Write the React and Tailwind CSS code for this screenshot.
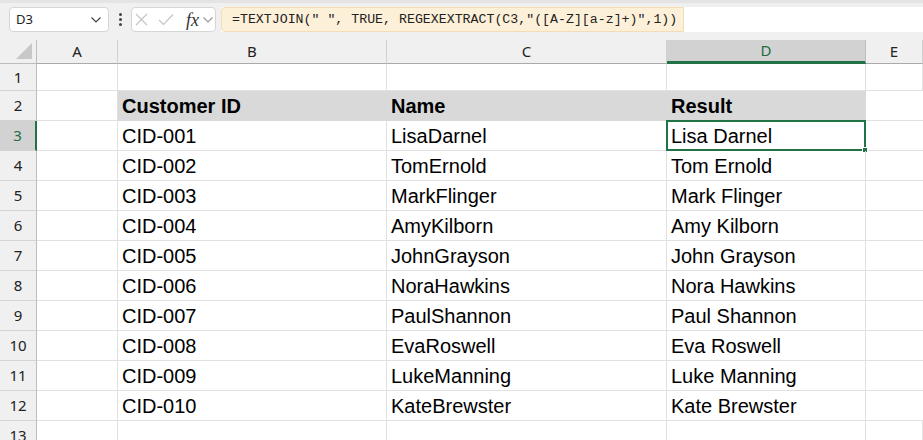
import React from "react";

const rows = [
  ["CID-001", "LisaDarnel", "Lisa Darnel"],
  ["CID-002", "TomErnold", "Tom Ernold"],
  ["CID-003", "MarkFlinger", "Mark Flinger"],
  ["CID-004", "AmyKilborn", "Amy Kilborn"],
  ["CID-005", "JohnGrayson", "John Grayson"],
  ["CID-006", "NoraHawkins", "Nora Hawkins"],
  ["CID-007", "PaulShannon", "Paul Shannon"],
  ["CID-008", "EvaRoswell", "Eva Roswell"],
  ["CID-009", "LukeManning", "Luke Manning"],
  ["CID-010", "KateBrewster", "Kate Brewster"],
];

const cols = ["A", "B", "C", "D", "E"];
const ui = { fontFamily: '"Segoe UI", "Noto Sans", "Liberation Sans", sans-serif' };
const cellFont = { fontFamily: '"Liberation Sans", Arial, sans-serif' };

function Chevron({ className }) {
  return (
    <svg width="12" height="8" viewBox="0 0 12 8" className={`shrink-0 ${className}`}>
      <polyline points="1.5,1.5 6,6 10.5,1.5" fill="none" stroke="currentColor" strokeWidth="1.2" />
    </svg>
  );
}

function RowHeader({ n, h, selected }) {
  return (
    <div
      className={`flex items-center justify-center border-b border-[#d4d4d4] text-[15px] ${
        selected
          ? "bg-[#d2d2d2] text-[#1e6b45] border-r-2 border-r-[#217346]"
          : "bg-[#f0f0f0] text-[#222] border-r border-r-[#bdbdbd]"
      } ${h}`}
      style={ui}
    >
      {n}
    </div>
  );
}

export default function App() {
  return (
    <div className="w-[923px] h-[440px] overflow-hidden bg-white">
      {/* toolbar */}
      <div className="h-[40px] bg-[#f0f0f0] border-t-[3px] border-[#e4e4e4] flex items-start pt-[4px]">
        <div className="ml-[9px] w-[100px] h-[25px] bg-white border border-[#d6d6d6] rounded-[4px] flex items-center justify-between pl-[6px] pr-[6px]">
          <span className="text-[13px] text-[#222]" style={ui}>D3</span>
          <Chevron className="text-[#444]" />
        </div>
        <div className="w-[22px] h-[25px] flex flex-col items-center justify-center gap-[2px]">
          <span className="w-[3px] h-[3px] bg-[#444] rounded-full" />
          <span className="w-[3px] h-[3px] bg-[#444] rounded-full" />
          <span className="w-[3px] h-[3px] bg-[#444] rounded-full" />
        </div>
        <div className="w-[85px] h-[25px] bg-white border border-[#d6d6d6] rounded-[4px] flex items-center pl-[3px]">
          <svg width="13" height="13" viewBox="0 0 13 13" className="shrink-0">
            <path d="M1 1 L12 12 M12 1 L1 12" stroke="#c4c4c4" strokeWidth="1.2" fill="none" />
          </svg>
          <svg width="16" height="13" viewBox="0 0 16 13" className="shrink-0 ml-[10px]">
            <polyline points="1,7 5.5,11.5 15,1.5" stroke="#c4c4c4" strokeWidth="1.2" fill="none" />
          </svg>
          <span
            className="italic text-[18px] leading-none text-[#333] ml-[12px] shrink-0"
            style={{ fontFamily: '"Liberation Serif", "Times New Roman", serif' }}
          >
            fx
          </span>
          <Chevron className="text-[#999] ml-[3px]" />
        </div>
        <div className="ml-[5px] flex-1 h-[25px] bg-white flex">
          <div className="h-[25px] w-[463px] bg-[#fdf0d9] border border-[#f2ddb6] rounded-l-[4px] flex items-center pl-[10px]">
            <span
              className="text-[13.25px] text-[#222] whitespace-pre"
              style={{ fontFamily: '"Liberation Mono", "DejaVu Sans Mono", monospace' }}
            >
              {'=TEXTJOIN(" ", TRUE, REGEXEXTRACT(C3,"([A-Z][a-z]+)",1))'}
            </span>
          </div>
        </div>
      </div>

      {/* grid */}
      <div className="grid grid-cols-[37px_81px_269px_280px_199px_57px]">
        {/* column header row */}
        <div className="h-[24px] bg-[#f0f0f0] border-r border-b border-[#bdbdbd] relative">
          <svg width="18" height="18" viewBox="0 0 18 18" className="absolute right-[3px] bottom-[3px]">
            <polygon points="17,1 17,17 1,17" fill="#c8c8c8" />
          </svg>
        </div>
        {cols.map((c) => (
          <div
            key={c}
            className={`h-[24px] flex items-center justify-center text-[15px] pb-[1px] ${
              c === "D"
                ? "bg-[#d2d2d2] text-[#1e6b45] border-b-[3px] border-b-[#217346] border-r border-r-[#bdbdbd]"
                : "bg-[#f0f0f0] text-[#222] border-b border-b-[#aaaaaa] border-r border-r-[#d0d0d0]"
            }`}
            style={ui}
          >
            {c}
          </div>
        ))}

        {/* row 1 */}
        <RowHeader n={1} h="h-[27px]" />
        {cols.map((c) => (
          <div key={c} className="h-[27px] border-r border-b border-[#e1e1e1]" />
        ))}

        {/* row 2 */}
        <RowHeader n={2} h="h-[30px]" />
        <div className="h-[30px] border-r border-b border-[#e1e1e1]" />
        {["Customer ID", "Name", "Result"].map((t) => (
          <div
            key={t}
            className="h-[30px] bg-[#d9d9d9] border-r border-b border-[#d9d9d9] flex items-center pl-[4px] font-bold text-[20px] text-black"
            style={cellFont}
          >
            {t}
          </div>
        ))}
        <div className="h-[30px] border-b border-[#e1e1e1]" />

        {rows.map((r, i) => (
          <React.Fragment key={r[0]}>
            <RowHeader n={i + 3} h="h-[30px]" selected={i === 0} />
            <div className="h-[30px] border-r border-b border-[#e1e1e1]" />
            {r.map((t, j) => (
              <div
                key={j}
                className="relative h-[30px] border-r border-b border-[#e1e1e1] flex items-center pl-[4px] text-[20px] text-black"
                style={cellFont}
              >
                {t}
                {i === 0 && j === 2 && (
                  <>
                    <div className="absolute left-[-1px] top-[-1px] right-[-1px] bottom-[-1px] border-2 border-[#217346] pointer-events-none" />
                    <div className="absolute right-[-3px] bottom-[-3px] w-[6px] h-[6px] bg-[#217346] border border-white" />
                  </>
                )}
              </div>
            ))}
            <div className="h-[30px] border-b border-[#e1e1e1]" />
          </React.Fragment>
        ))}

        {/* row 13 */}
        <RowHeader n={13} h="h-[30px]" />
        {cols.map((c) => (
          <div key={c} className="h-[30px] border-r border-b border-[#e1e1e1]" />
        ))}
      </div>
    </div>
  );
}
